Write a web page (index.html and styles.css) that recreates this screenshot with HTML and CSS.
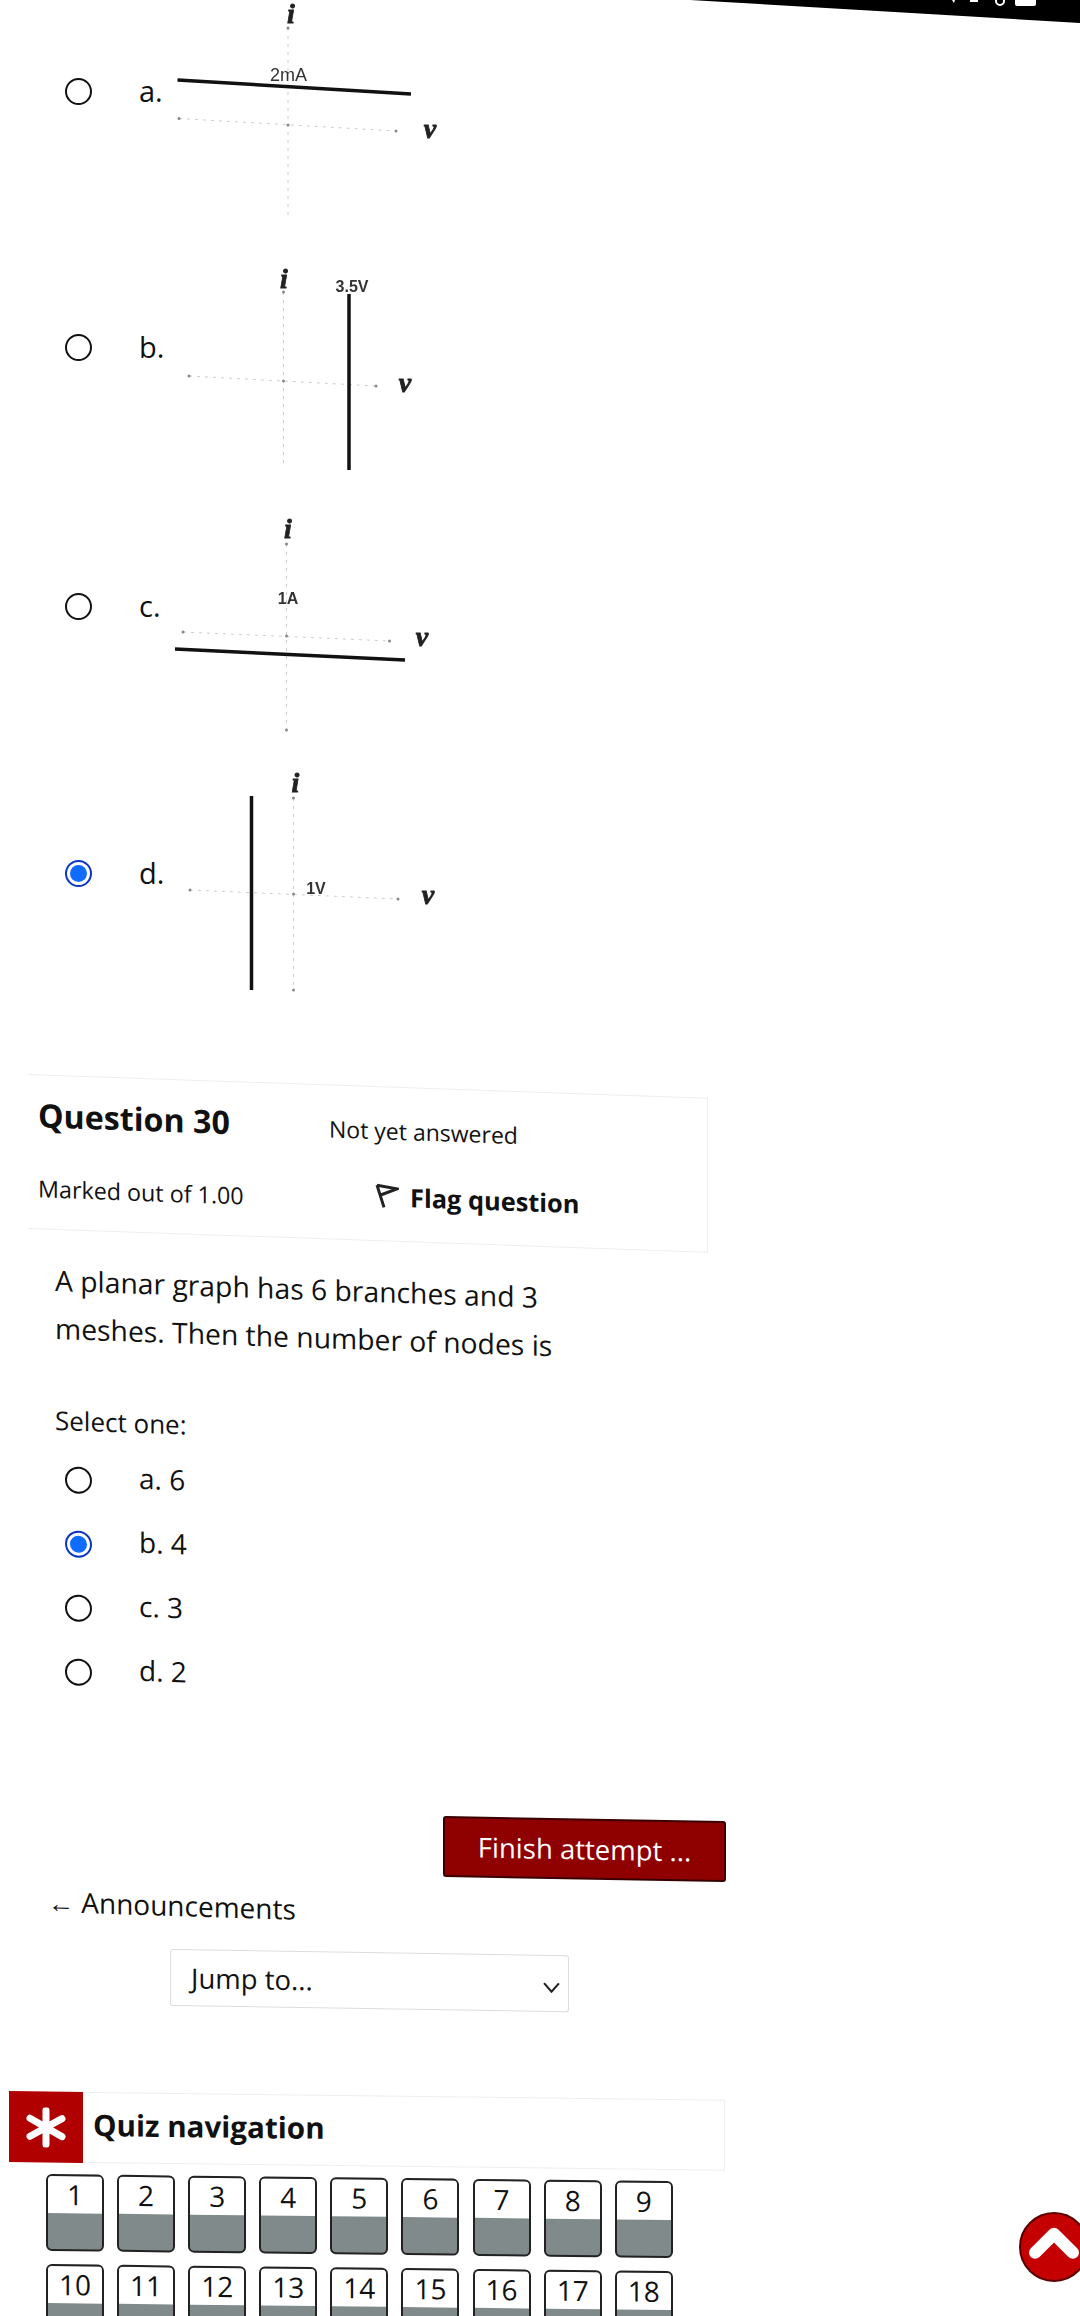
FILE: index.html
```html
<!DOCTYPE html>
<html lang="en">
<head>
    <meta charset="UTF-8">
    <meta name="viewport" content="width=device-width, initial-scale=1.0">
    <title>Quiz attempt</title>
    <link rel="stylesheet" href="styles.css">
</head>
<body>
    <svg class="top-bar" viewBox="0 0 390 26">
        <polygon points="0,0 390,0 390,23"/>
        <path class="top-icons" d="M325 0h21v4q0 2-2 2h-17q-2 0-2-2z"/>
        <circle class="top-ring" cx="310" cy="1" r="4"/>
        <path class="top-icons" d="M262 0h3l-1 3zM280 0h8v2h-8z"/>
    </svg>

    <!-- answers of question 29 -->
    <div class="graph-options">
        <label class="graph-option row-a">
            <input type="radio" name="q29">
            <span class="opt-label">a.</span>
            <svg class="graph" viewBox="160 -37 300 256">
                <line class="axis" x1="288" y1="28" x2="288" y2="218"/>
                <line class="axis" x1="179" y1="118.5" x2="396" y2="131"/>
                <circle class="tick" cx="179" cy="118.5" r="1.5"/>
                <circle class="tick" cx="396" cy="131" r="1.5"/>
                <circle class="tick" cx="288" cy="28" r="1.5"/>
                <circle class="tick" cx="288" cy="125" r="1.5"/>
                <line class="curve" x1="177.5" y1="80" x2="411" y2="94"/>
                <text class="sym" x="291" y="23">i</text>
                <text class="sym" x="430" y="138">v</text>
                <text class="val val-wide" x="288.5" y="81">2mA</text>
            </svg>
        </label>
        <label class="graph-option row-b">
            <input type="radio" name="q29">
            <span class="opt-label">b.</span>
            <svg class="graph" viewBox="160 219 300 256">
                <line class="axis" x1="283.5" y1="292" x2="283.5" y2="465"/>
                <line class="axis" x1="189" y1="376" x2="376" y2="386"/>
                <circle class="tick" cx="189" cy="376" r="1.5"/>
                <circle class="tick" cx="376" cy="386" r="1.5"/>
                <circle class="tick" cx="283.5" cy="292" r="1.5"/>
                <circle class="tick" cx="283.5" cy="381" r="1.5"/>
                <line class="curve" x1="349" y1="294" x2="349" y2="470"/>
                <text class="sym" x="284" y="288">i</text>
                <text class="sym" x="405" y="392">v</text>
                <text class="val" x="352" y="292">3.5V</text>
            </svg>
        </label>
        <label class="graph-option row-c">
            <input type="radio" name="q29">
            <span class="opt-label">c.</span>
            <svg class="graph" viewBox="160 475 300 262">
                <line class="axis" x1="286.5" y1="544" x2="286.5" y2="730"/>
                <line class="axis" x1="183" y1="632" x2="389.5" y2="641"/>
                <circle class="tick" cx="183" cy="632" r="1.5"/>
                <circle class="tick" cx="389.5" cy="641" r="1.5"/>
                <circle class="tick" cx="286.5" cy="544" r="1.5"/>
                <circle class="tick" cx="286.5" cy="730" r="1.5"/>
                <circle class="tick" cx="286.5" cy="636" r="1.5"/>
                <line class="curve" x1="175" y1="649" x2="405" y2="660"/>
                <text class="sym" x="288" y="538">i</text>
                <text class="sym" x="422" y="646">v</text>
                <text class="val" x="288" y="604">1A</text>
            </svg>
        </label>
        <label class="graph-option row-d">
            <input type="radio" name="q29" checked>
            <span class="opt-label">d.</span>
            <svg class="graph" viewBox="160 737 300 272">
                <line class="axis" x1="293.5" y1="798" x2="293.5" y2="990"/>
                <line class="axis" x1="190" y1="890" x2="398" y2="899"/>
                <circle class="tick" cx="190" cy="890" r="1.5"/>
                <circle class="tick" cx="398" cy="899" r="1.5"/>
                <circle class="tick" cx="293.5" cy="798" r="1.5"/>
                <circle class="tick" cx="293.5" cy="990" r="1.5"/>
                <circle class="tick" cx="293.5" cy="894" r="1.5"/>
                <line class="curve" x1="251.5" y1="796" x2="251.5" y2="990"/>
                <text class="sym" x="295.5" y="792">i</text>
                <text class="sym" x="428" y="904">v</text>
                <text class="val" x="316" y="894">1V</text>
            </svg>
        </label>
    </div>

    <!-- question 30 -->
    <div class="que">
        <div class="que-info">
            <h3 class="que-no">Question 30</h3>
            <div class="que-state">Not yet answered</div>
            <div class="que-grade">Marked out of 1.00</div>
            <div class="que-flag">
                <svg class="flag-icon" viewBox="0 0 24 26">
                    <path d="M2 2L22 5L5 12M2 2L9 24"/>
                </svg>
                <span>Flag question</span>
            </div>
        </div>
        <p class="que-text">A planar graph has 6 branches and 3 meshes. Then the number of nodes is</p>
        <div class="que-prompt">Select one:</div>
        <label class="answer"><input type="radio" name="q30"><span>a. 6</span></label>
        <label class="answer"><input type="radio" name="q30" checked><span>b. 4</span></label>
        <label class="answer"><input type="radio" name="q30"><span>c. 3</span></label>
        <label class="answer"><input type="radio" name="q30"><span>d. 2</span></label>
    </div>

    <button class="finish-btn">Finish attempt ...</button>

    <a class="prev-link"><span class="prev-arrow">←</span> Announcements</a>

    <div class="jump-select">
        <span>Jump to...</span>
        <svg class="chevron" viewBox="0 0 16 10"><path d="M1 1L8 9L15 1"/></svg>
    </div>

    <!-- quiz navigation block -->
    <div class="nav-head">
        <div class="nav-icon">
            <svg viewBox="0 0 40 40">
                <path d="M20 3V37M4 11L36 29M4 29L36 11"/>
            </svg>
        </div>
        <h3 class="nav-title">Quiz navigation</h3>
    </div>
    <div class="nav-grid">
        <a class="qn-btn"><span>1</span></a>
        <a class="qn-btn"><span>2</span></a>
        <a class="qn-btn"><span>3</span></a>
        <a class="qn-btn"><span>4</span></a>
        <a class="qn-btn"><span>5</span></a>
        <a class="qn-btn"><span>6</span></a>
        <a class="qn-btn"><span>7</span></a>
        <a class="qn-btn"><span>8</span></a>
        <a class="qn-btn"><span>9</span></a>
        <a class="qn-btn"><span>10</span></a>
        <a class="qn-btn"><span>11</span></a>
        <a class="qn-btn"><span>12</span></a>
        <a class="qn-btn"><span>13</span></a>
        <a class="qn-btn"><span>14</span></a>
        <a class="qn-btn"><span>15</span></a>
        <a class="qn-btn"><span>16</span></a>
        <a class="qn-btn"><span>17</span></a>
        <a class="qn-btn"><span>18</span></a>
    </div>

    <a class="to-top">
        <svg viewBox="0 0 70 70">
            <path d="M15 41L35 21L55 41"/>
        </svg>
    </a>
</body>
</html>
```

FILE: styles.css
```css
html, body {
    margin: 0;
    padding: 0;
    height: 2316px;
    overflow: hidden;
    background: #fff;
}
body {
    font-family: "Open Sans", "Noto Sans", sans-serif;
    color: #111;
    position: relative;
}

/* black strip of the phone status bar, photographed at an angle */
.top-bar {
    position: absolute;
    top: 0;
    right: 0;
    width: 390px;
    height: 26px;
}
.top-icons {
    fill: #fff;
}
.top-ring {
    fill: none;
    stroke: #fff;
    stroke-width: 2;
}

/* radios */
input[type="radio"] {
    appearance: none;
    flex: none;
    width: 27px;
    height: 27px;
    margin: 0;
    border: 2.5px solid #111;
    border-radius: 50%;
    background: #fff;
    box-sizing: border-box;
}
input[type="radio"]:checked {
    border-color: #0b35c4;
    padding: 3px;
    background: #0f6cff content-box;
}

/* image answers */
.graph-options {
    margin-top: -37px;
}
.graph-option {
    display: flex;
    align-items: center;
    padding-left: 65px;
    position: relative;
}
.row-a, .row-b { height: 256px; }
.row-c { height: 262px; }
.row-d { height: 272px; }
.opt-label {
    font-size: 29px;
    margin-left: 47px;
    margin-bottom: 2px;
}
.graph {
    position: absolute;
    left: 160px;
    top: 0;
    width: 300px;
    height: 100%;
    filter: blur(0.6px);
}
.axis {
    stroke: #ccc;
    stroke-width: 1;
    stroke-dasharray: 3 5;
}
.tick {
    fill: #888;
}
.curve {
    stroke: #111;
    stroke-width: 3.5;
}
.sym {
    font-family: "Liberation Serif", serif;
    font-weight: bold;
    font-style: italic;
    font-size: 28px;
    text-anchor: middle;
    fill: #222;
    stroke: #222;
    stroke-width: 0.8;
}
.val {
    font-family: "Liberation Sans", sans-serif;
    font-size: 16px;
    font-weight: bold;
    text-anchor: middle;
    fill: #333;
}
.val-wide {
    font-size: 18px;
    font-weight: normal;
}

/* question block */
.que {
    margin-top: 64px;
    transform: skewY(2deg);
    transform-origin: 0 0;
}
.que-info {
    margin-left: 28px;
    width: 680px;
    height: 155px;
    box-sizing: border-box;
    padding: 18px 0 0 10px;
    border: 1px solid #eee;
    border-left: none;
    display: grid;
    grid-template-columns: 291px 1fr;
    grid-template-rows: 44px 36px;
    row-gap: 33px;
    align-items: baseline;
}
.que-no {
    margin: 0;
    font-size: 32.2px;
    line-height: 44px;
    font-weight: 700;
}
.que-state {
    font-size: 23px;
}
.que-grade {
    font-size: 23.3px;
    line-height: 36px;
}
.que-flag {
    display: flex;
    align-items: baseline;
    gap: 11px;
    margin-left: 46px;
    font-size: 25.4px;
    font-weight: 700;
    position: relative;
    top: -3px;
}
.flag-icon {
    width: 24px;
    height: 26px;
    flex: none;
    align-self: center;
}
.flag-icon path {
    fill: none;
    stroke: #222;
    stroke-width: 3;
}
.que-text {
    margin: 26px 0 0 55px;
    width: 520px;
    font-size: 28.3px;
    line-height: 48px;
}
.que-prompt {
    margin: 50px 0 9px 55px;
    font-size: 26px;
    line-height: 36px;
}
.answer {
    display: flex;
    align-items: center;
    gap: 47px;
    height: 64px;
    padding-left: 65px;
    font-size: 28px;
}
.answer span {
    margin-bottom: 8px;
}

/* bottom controls */
.finish-btn {
    display: block;
    margin: 115px 0 0 443px;
    width: 283px;
    height: 61px;
    padding: 0;
    background: #8f0000;
    color: #fff;
    border: 2px solid #3a0000;
    border-radius: 3px;
    font-family: inherit;
    font-size: 27.5px;
    transform: skewY(1deg);
    transform-origin: 0 0;
}
.prev-link {
    display: block;
    margin: 4px 0 0 48px;
    font-size: 28px;
    line-height: 40px;
    transform: skewY(1.8deg);
    transform-origin: 0 0;
}
.prev-arrow {
    font-size: 26px;
}
.jump-select {
    margin: 27px 0 0 170px;
    width: 399px;
    height: 57px;
    box-sizing: border-box;
    padding: 0 8px 0 20px;
    border: 1px solid #ddd;
    border-radius: 3px;
    display: flex;
    align-items: center;
    justify-content: space-between;
    font-size: 27.5px;
    transform: skewY(0.9deg);
    transform-origin: 0 0;
}
.chevron {
    width: 17px;
    height: 11px;
    margin-top: 8px;
}
.chevron path {
    fill: none;
    stroke: #222;
    stroke-width: 2;
}

/* quiz navigation */
.nav-head {
    margin: 85px 0 0 9px;
    width: 716px;
    height: 71px;
    box-sizing: border-box;
    border: 1px solid #eee;
    border-left: none;
    display: flex;
    align-items: center;
    transform: skewY(0.7deg);
    transform-origin: 0 0;
}
.nav-icon {
    width: 74px;
    height: 71px;
    background: #b00000;
    display: flex;
    align-items: center;
    justify-content: center;
    flex: none;
}
.nav-icon svg {
    width: 40px;
    height: 40px;
}
.nav-icon path {
    fill: none;
    stroke: #fff;
    stroke-width: 7;
    stroke-linecap: round;
}
.nav-title {
    margin: 0 0 6px 10px;
    font-size: 29.6px;
    font-weight: 700;
}
.nav-grid {
    margin: 12px 0 0 46px;
    display: grid;
    grid-template-columns: repeat(9, 58px);
    column-gap: 13.1px;
    row-gap: 12.5px;
    transform: skewY(0.65deg);
    transform-origin: 0 0;
}
.qn-btn {
    height: 77px;
    box-sizing: border-box;
    border: 2px solid #222;
    border-radius: 6px;
    background: #808a8a;
    overflow: hidden;
    font-size: 28px;
    text-align: center;
}
.qn-btn span {
    display: block;
    height: 37px;
    line-height: 37px;
    background: #fff;
}

/* scroll to top */
.to-top {
    position: absolute;
    left: 1019px;
    top: 2212px;
    width: 70px;
    height: 70px;
    box-sizing: border-box;
    border-radius: 50%;
    border: 2px solid #5a0000;
    background: #c40000;
}
.to-top svg {
    display: block;
    width: 66px;
    height: 66px;
}
.to-top path {
    fill: none;
    stroke: #fff;
    stroke-width: 13;
    stroke-linecap: round;
    stroke-linejoin: round;
}
```
